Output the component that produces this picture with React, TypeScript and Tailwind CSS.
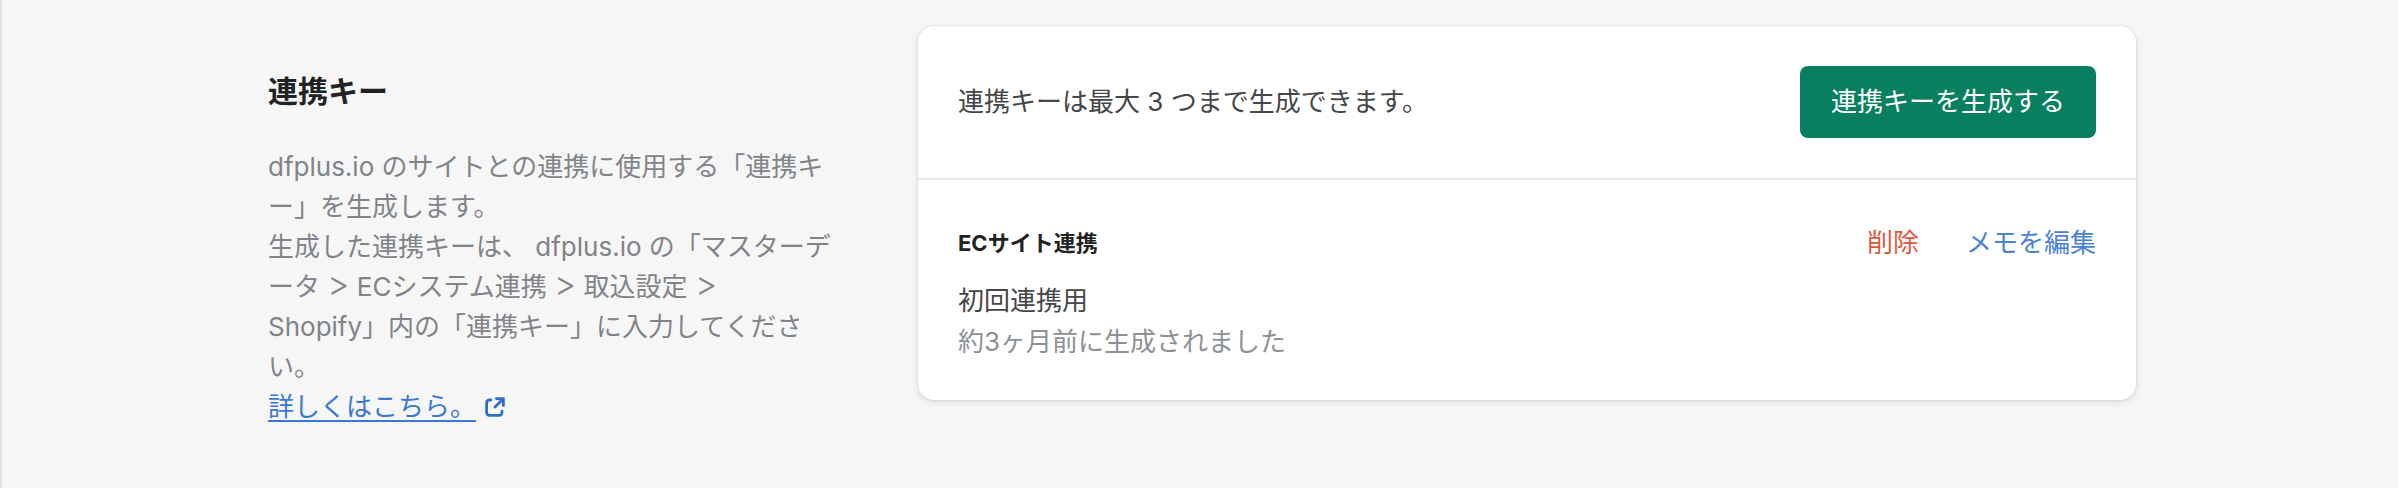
import React from "react";

const ExternalIcon = () => (
  <svg viewBox="0 0 20 20" className="w-7 h-7 fill-[#2c6ecb] shrink-0" aria-hidden="true">
    <path d="M14 13v1a1 1 0 0 1-1 1H6c-.575 0-1-.484-1-1V7a1 1 0 0 1 1-1h1a1 1 0 0 0 0-2H6a3 3 0 0 0-3 3v7a3 3 0 0 0 3 3h7a3 3 0 0 0 3-3v-1a1 1 0 1 0-2 0z" />
    <path d="M17 4a1 1 0 0 0-1-1h-5a1 1 0 1 0 0 2h2.586l-4.293 4.293a.999.999 0 1 0 1.414 1.414L15 6.414V9a1 1 0 1 0 2 0V4z" />
  </svg>
);

// the > in the breadcrumb is drawn larger than the body font's glyph
const Gt = () => <span className="text-[34px] leading-none font-light">&gt;</span>;

const App: React.FC = () => {
  return (
    <div className="min-h-[488px] bg-[#f6f6f7] border-l-2 border-[#e1e3e5] pl-[266px] pt-[26px] flex items-start gap-[78px] font-['Inter','Noto_Sans_CJK_JP',sans-serif] text-[26px] leading-[40px] antialiased">
      <section className="w-[572px] shrink-0 pt-[45px]">
        <h2 className="text-[30px] leading-[40px] font-bold text-[#202223]">連携キー</h2>
        <div className="mt-[36px] text-[#808488] whitespace-nowrap">
          <p>dfplus.io のサイトとの連携に使用する「連携キ</p>
          <p>ー」を生成します。</p>
          <p>生成した連携キーは、 dfplus.io の「マスターデ</p>
          <p>
            ータ <Gt /> ECシステム連携 <Gt /> 取込設定 <Gt />
          </p>
          <p>Shopify」内の「連携キー」に入力してくださ</p>
          <p>い。</p>
        </div>
        <a className="flex items-center gap-[5px] text-[#3a78d2]">
          <span className="underline underline-offset-4">詳しくはこちら。</span>
          <ExternalIcon />
        </a>
      </section>

      <section className="w-[1218px] shrink-0 bg-white rounded-2xl shadow-[0_0_0_1px_rgba(63,63,68,0.05),0_2px_6px_rgba(63,63,68,0.15)]">
        <div className="flex items-center justify-between p-10 border-b-2 border-[#e9eaeb]">
          <p className="text-[#444648]">連携キーは最大 3 つまで生成できます。</p>
          <button className="h-[72px] px-[31px] rounded-lg bg-[#087f5f] text-white">連携キーを生成する</button>
        </div>
        <div className="h-[220px] px-10 pt-[43px]">
          <div className="flex items-center justify-between">
            <h3 className="text-[22px] font-bold text-[#202223]">ECサイト連携</h3>
            <div className="flex items-center gap-[47px]">
              <button className="text-[#de5a3f]">削除</button>
              <button className="text-[#4a82d4]">メモを編集</button>
            </div>
          </div>
          <p className="mt-[18px] text-[#444648]">初回連携用</p>
          <p className="mt-px text-[#8c9196]">約3ヶ月前に生成されました</p>
        </div>
      </section>
    </div>
  );
};

export default App;
